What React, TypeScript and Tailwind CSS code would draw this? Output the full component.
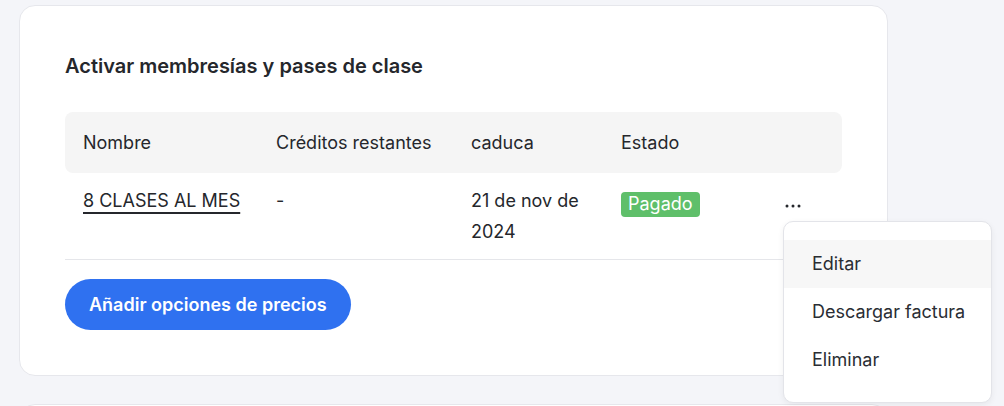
import React from "react";

const COLS = "grid grid-cols-[193px_195px_150px_164px_1fr]";

const MENU_ITEMS = ["Editar", "Descargar factura", "Eliminar"];

function Dots() {
  return (
    <svg width="16" height="4" viewBox="0 0 16 4" className="text-[#25272c]">
      <circle cx="2" cy="2" r="1.5" fill="currentColor" />
      <circle cx="8" cy="2" r="1.5" fill="currentColor" />
      <circle cx="14" cy="2" r="1.5" fill="currentColor" />
    </svg>
  );
}

function ActionsMenu() {
  return (
    <div className="absolute left-[16px] top-[36px] z-10 w-[209px] rounded-[10px] border border-[#e3e4e9] bg-white py-[18px] shadow-[0_2px_6px_rgba(0,0,0,0.06)]">
      {MENU_ITEMS.map((label, i) => (
        <div
          key={label}
          className={`flex h-12 items-center pl-[28px] text-lg text-[#2a2d33] ${
            i === 0 ? "bg-[#f7f7f7]" : ""
          }`}
        >
          {label}
        </div>
      ))}
    </div>
  );
}

export default function App() {
  return (
    <div
      className="h-[406px] overflow-hidden bg-[#f4f5f9] pl-[19px] pt-[5px]"
      style={{ fontFamily: "Inter, 'Noto Sans', sans-serif" }}
    >
      <div className="w-[869px] rounded-[16px] border-[1.5px] border-[#e6e7ec] bg-white px-[45px] pb-[45px] pt-[46px] text-[#25272c]">
        <h2 className="text-xl font-semibold leading-7">
          Activar membresías y pases de clase
        </h2>

        <div className="mt-8">
          <div className={`${COLS} h-[61px] items-center rounded-lg bg-[#f5f5f5] text-lg`}>
            <div className="pl-[18px]">Nombre</div>
            <div className="pl-[18px]">Créditos restantes</div>
            <div className="pl-[18px]">caduca</div>
            <div className="pl-[18px]">Estado</div>
            <div />
          </div>

          <div className={`${COLS} border-b-[1.5px] border-[#e5e6ea] pb-3 pt-3 text-lg leading-[31px]`}>
            <div className="pl-[18px]">
              <span className="underline decoration-2 underline-offset-[5px]">8 CLASES AL MES</span>
            </div>
            <div className="pl-[18px]">-</div>
            <div className="pl-[18px] pr-[18px]">21 de nov de 2024</div>
            <div className="pl-[18px] pt-[3px]">
              <span className="inline-flex h-[25px] items-center rounded-[4px] bg-[#5fbf6a] px-[7px] leading-none text-white">
                Pagado
              </span>
            </div>
            <div className="relative pl-[18px]">
              <div className="flex h-[31px] items-center pt-[10px]">
                <Dots />
              </div>
              <ActionsMenu />
            </div>
          </div>
        </div>

        <button className="mt-[19px] h-[51px] rounded-full bg-[#2f71f0] px-6 text-lg font-semibold text-white">
          Añadir opciones de precios
        </button>
      </div>

      <div className="mt-[28px] h-10 w-[869px] rounded-[16px] border-[1.5px] border-[#e6e7ec] bg-white" />
    </div>
  );
}
